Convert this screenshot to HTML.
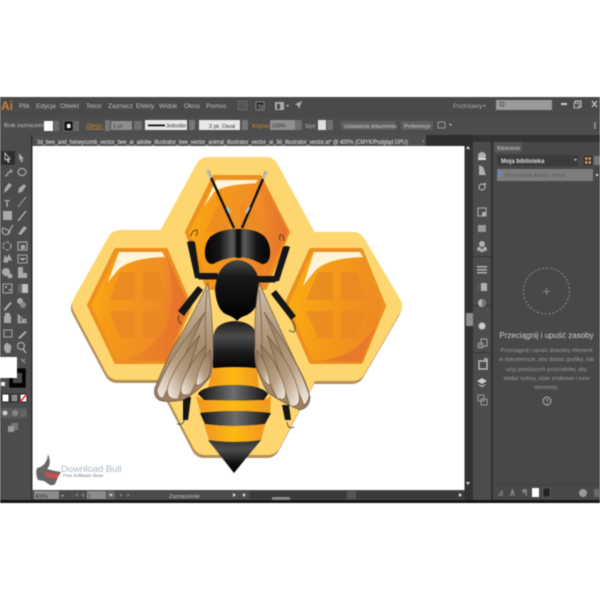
<!DOCTYPE html>
<html><head><meta charset="utf-8"><style>
html,body{margin:0;padding:0;background:#fff;width:600px;height:600px;overflow:hidden}
svg{display:block;filter:blur(.65px)}
text{font-family:"Liberation Sans",sans-serif}
</style></head><body>
<svg width="600" height="600" viewBox="0 0 600 600" xmlns="http://www.w3.org/2000/svg">
<defs>
<linearGradient id="hon" x1="0" y1="0" x2="1" y2=".2"><stop offset="0" stop-color="#fcb010"/><stop offset=".3" stop-color="#f69a18"/><stop offset=".75" stop-color="#f08c26"/><stop offset="1" stop-color="#e8742a"/></linearGradient>
<linearGradient id="honr" x1="0" y1="0" x2="1" y2=".2"><stop offset="0" stop-color="#fcb010"/><stop offset=".5" stop-color="#f59a18"/><stop offset="1" stop-color="#ee8a22"/></linearGradient>
<linearGradient id="red" x1="0" y1="0" x2="1" y2="0"><stop offset="0" stop-color="#ee8c28"/><stop offset="1" stop-color="#e6702c"/></linearGradient>
<linearGradient id="blk" x1="0" y1="0" x2="0" y2="1"><stop offset="0" stop-color="#1c1c1c"/><stop offset=".32" stop-color="#4c4c4c"/><stop offset=".65" stop-color="#1c1c1c"/><stop offset="1" stop-color="#030303"/></linearGradient>
<linearGradient id="th" x1="0" y1="0" x2="0" y2="1"><stop offset="0" stop-color="#4a4a4a"/><stop offset=".28" stop-color="#181818"/><stop offset="1" stop-color="#000"/></linearGradient>
<linearGradient id="band" x1="0" y1="0" x2="1" y2="0"><stop offset="0" stop-color="#111"/><stop offset=".5" stop-color="#6e6e6e"/><stop offset="1" stop-color="#111"/></linearGradient>
<linearGradient id="tip" x1="0" y1="0" x2="0" y2="1"><stop offset="0" stop-color="#333"/><stop offset=".3" stop-color="#4c4c4c"/><stop offset=".7" stop-color="#111"/><stop offset="1" stop-color="#000"/></linearGradient>
<linearGradient id="yel" x1="0" y1="0" x2="1" y2="0"><stop offset="0" stop-color="#f1961e"/><stop offset=".5" stop-color="#fdb913"/><stop offset="1" stop-color="#f1961e"/></linearGradient>
<linearGradient id="eye" x1="0" y1="0" x2="1" y2="0"><stop offset="0" stop-color="#050505"/><stop offset=".45" stop-color="#151515"/><stop offset=".85" stop-color="#5c5c5c"/><stop offset="1" stop-color="#2c2c2c"/></linearGradient>
<linearGradient id="eye2" x1="1" y1="0" x2="0" y2="0"><stop offset="0" stop-color="#050505"/><stop offset=".45" stop-color="#151515"/><stop offset=".85" stop-color="#5c5c5c"/><stop offset="1" stop-color="#2c2c2c"/></linearGradient>
<linearGradient id="wing" x1="0" y1="0" x2="0" y2="1"><stop offset="0" stop-color="#cdbda7"/><stop offset=".5" stop-color="#ab9072"/><stop offset="1" stop-color="#9a7f60"/></linearGradient>
<linearGradient id="fL" x1="1" y1="0" x2="0" y2="1"><stop offset="0" stop-color="#8f7355"/><stop offset=".6" stop-color="#b89e82"/><stop offset="1" stop-color="#f4efe8"/></linearGradient>
<linearGradient id="fR" x1="0" y1="0" x2="1" y2="1"><stop offset="0" stop-color="#8f7355"/><stop offset=".6" stop-color="#b89e82"/><stop offset="1" stop-color="#f4efe8"/></linearGradient>
</defs>

<!-- chrome -->
<rect x="0" y="97" width="600" height="403" fill="#4a4a4a"/>
<rect x="0" y="117" width="600" height="18" fill="#4d4d4d"/>
<rect x="0" y="135" width="32" height="365" fill="#4c4c4c"/>
<rect x="32" y="135" width="432" height="11" fill="#363636"/>
<rect x="32" y="135" width="394" height="11" fill="#4f4f4f"/>
<rect x="426" y="135" width="47" height="12" fill="#2e2e2e"/>
<rect x="464" y="146" width="9" height="354" fill="#323232"/>
<rect x="466" y="313" width="7" height="13" fill="#8e8e8e"/>
<rect x="473" y="135" width="19" height="365" fill="#4c4c4c"/>
<rect x="492" y="135" width="108" height="365" fill="#484848"/>
<rect x="473" y="135" width="127" height="7" fill="#333"/>
<rect x="491" y="135" width="2" height="365" fill="#303030"/>
<rect x="473" y="305" width="19" height="1" fill="#333"/>
<rect x="473" y="352" width="19" height="1" fill="#333"/>
<rect x="473" y="256" width="19" height="1" fill="#333"/>
<rect x="493" y="484" width="107" height="1" fill="#404040"/>
<rect x="0" y="500" width="600" height="3" fill="#151515"/>
<rect x="31" y="135" width="1.5" height="365" fill="#2d2d2d"/>

<!-- menu -->
<text x="1" y="110" font-size="12" font-weight="700" fill="#c9823a">Ai</text>
<g font-size="6.6" fill="#bdbdbd">
<text x="19" y="108">Plik</text><text x="36" y="108">Edycja</text><text x="60" y="108">Obiekt</text><text x="86" y="108">Tekst</text><text x="108" y="108">Zaznacz</text><text x="136" y="108">Efekty</text><text x="159" y="108">Widok</text><text x="184" y="108">Okno</text><text x="206" y="108">Pomoc</text>
</g>
<rect x="238" y="101" width="9" height="9" fill="#555" stroke="#666"/>
<rect x="256" y="102" width="8" height="8" fill="#222" stroke="#888"/><text x="257.5" y="109" font-size="6" fill="#ccc">St</text>
<rect x="275" y="102" width="9" height="8" fill="#aaa"/><rect x="277" y="104" width="3" height="5" fill="#444"/><path d="M286 105h3l-1.500 2z" fill="#bbb"/>
<path d="M295 104l7-3-3 8-1-3z" fill="#aaa"/>
<text x="453" y="108" font-size="6.800" fill="#a5a5a5">Podstawy</text><path d="M483 105h3l-1.500 2z" fill="#aaa"/>
<rect x="496" y="100" width="56" height="10" fill="#9a9a9a"/>
<circle cx="502" cy="104" r="2" fill="none" stroke="#555"/>
<rect x="561" y="103" width="6" height="2" fill="#ccc"/>
<rect x="575" y="101" width="6" height="6" fill="none" stroke="#ccc"/><rect x="574" y="103" width="5" height="5" fill="#555" stroke="#ccc" stroke-width=".8"/>
<path d="M592 101l5 6m0-6l-5 6" stroke="#ccc" stroke-width="1.200"/>

<!-- control bar -->
<text x="4" y="127" font-size="5.600" fill="#c4c4c4">Brak zaznaczenia</text>
<rect x="44" y="121" width="9" height="10" fill="#fff"/>
<rect x="54" y="121" width="5" height="10" fill="#6a6a6a"/>
<rect x="64" y="121" width="9" height="10" fill="#111" stroke="#999" stroke-width=".5"/><rect x="67" y="124" width="3.500" height="4" fill="#fff"/>
<rect x="74" y="121" width="5" height="10" fill="#6a6a6a"/>
<text x="86" y="128" font-size="6" fill="#d08a2a" text-decoration="underline">Obrys:</text>
<rect x="105" y="120" width="5" height="11" fill="#777"/>
<rect x="111" y="121" width="21" height="9" fill="#8d8d8d"/><text x="113" y="128" font-size="5.600" fill="#444">1 pt</text>
<rect x="134" y="121" width="8" height="9" fill="#6f6f6f"/>
<rect x="145" y="120" width="42" height="10" fill="#e8e8e8"/><rect x="148" y="124.500" width="17" height="1.800" fill="#111"/><text x="166" y="127.500" font-size="5" fill="#333">Jednolite</text>
<rect x="189" y="120" width="6" height="10" fill="#777"/>
<rect x="199" y="120" width="41" height="10" fill="#e8e8e8"/><text x="209" y="128" font-size="5.800" fill="#333">2 pt. Owal</text>
<rect x="242" y="120" width="6" height="10" fill="#777"/>
<text x="252" y="128" font-size="6" fill="#d08a2a">Krycie:</text>
<rect x="270" y="120" width="25" height="10" fill="#8f8f8f"/><text x="272" y="127.500" font-size="5.400" fill="#333">100%</text>
<rect x="295" y="120" width="7" height="10" fill="#6f6f6f"/>
<text x="305" y="128" font-size="5.800" fill="#bbb">Styl:</text>
<rect x="318" y="120" width="8" height="10" fill="#e0e0e0"/><rect x="327" y="120" width="6" height="10" fill="#6f6f6f"/>
<rect x="341" y="121" width="55" height="9" fill="#5f5f5f"/><text x="344" y="128" font-size="5.200" fill="#cfcfcf">Ustawienia dokumentu</text>
<rect x="401" y="121" width="32" height="9" fill="#5f5f5f"/><text x="404" y="128" font-size="5.200" fill="#cfcfcf">Preferencje</text>
<rect x="438" y="122" width="7" height="6" fill="none" stroke="#aaa" stroke-width=".8"/><path d="M449 124h3l-1.500 2z" fill="#ccc"/>
<rect x="594" y="122" width="2" height="7" fill="#888"/>

<!-- tab -->
<text x="37" y="144" font-size="6" fill="#ececec" textLength="371" lengthAdjust="spacingAndGlyphs">3d_bee_and_honeycomb_vector_bee_ai_adobe_illustrator_bee_vector_animal_illustrator_vector_ai_3d_illustrator_vector.ai* @ 400% (CMYK/Podgląd GPU)</text>
<text x="422" y="143" font-size="5" fill="#aaa">×</text>

<!-- canvas -->
<rect x="32.500" y="146" width="432" height="344" fill="#fff"/>

<!-- honeycomb -->
<g stroke-linejoin="round">
<path d="M208 170H266L340 306L268 442H205L134 306Z M120 243H160L196 305L160 367H118L85 305Z M313 245H353L389 306L353 368H313L276 306Z" fill="#b3905c" stroke="#b3905c" stroke-width="26" transform="translate(-1 3)"/>
<path d="M208 170H266L340 306L268 442H205L134 306Z" fill="#fdd66f" stroke="#fdd66f" stroke-width="26"/>
<path d="M120 243H160L196 305L160 367H118L85 305Z" fill="#fdd66f" stroke="#fdd66f" stroke-width="26"/>
<path d="M313 245H353L389 306L353 368H313L276 306Z" fill="#fdd66f" stroke="#fdd66f" stroke-width="26"/>
<!-- center cell -->
<path d="M214 177H260L288 232L265 288H208L187 232Z" fill="url(#hon)" stroke="#ec9020" stroke-width="4"/>
<path d="M204 207L216 180H258L262 183Q225 184 214 192Z" fill="#fff3d8"/>
<path d="M218 205L229 205V232H206ZM240 205H253L266 232H240Z" fill="#ea8a22" opacity=".7"/>
<path d="M256 182Q272 215 264 250L262 288L288 232L262 178Z" fill="url(#red)"/>
<!-- left cell -->
<path d="M116 250H166L190 306L166 362H116L89 305Z" fill="url(#hon)" stroke="#ec9020" stroke-width="4"/>
<path d="M108 282L119 252H162L165 257Q130 258 118 270Z" fill="#fff3d8"/>
<path d="M120 272H135V300H110Z M143 272H158L169 300H143Z M110 311H135V338H120Z M143 311H169L158 338H143Z" fill="#e98822" opacity=".85"/>
<path d="M166 254Q178 300 165 330Q150 352 122 361H166L189 306Z" fill="url(#red)"/>
<!-- right cell -->
<path d="M311 250H361L384 306L361 362H311L286 305Z" fill="url(#honr)" stroke="#ec9020" stroke-width="4"/>
<path d="M303 286L314 252H360L363 257Q326 258 314 272Z" fill="#fff3d8"/>
<path d="M318 272H333V300H306Z M341 272H356L367 300H341Z M306 311H333V338H318Z M341 311H367L356 338H341Z" fill="#e98822" opacity=".8"/>
<path d="M320 361Q365 356 382 312L361 362Z" fill="#e8782c"/>
</g>

<!-- antennae -->
<path d="M208 171L234 228M266 172L242 228" stroke="#111" stroke-width="2.400" fill="none"/>
<path d="M207 170L211 178M267 171L263 179M227 207L230 213M249 207L246 213" stroke="#bbb" stroke-width="2.600"/>

<!-- legs -->
<g fill="#161616">
<path d="M187 242Q192 240 195 242L200 276Q198 279 195 278Z"/>
<path d="M290 247Q286 245 283 247L273 279Q276 282 279 281Z"/>
<rect x="198" y="273" width="20" height="6.500" rx="1.500"/>
<rect x="255" y="276" width="21" height="6.500" rx="1.500"/>
<path d="M198 286L203 290L184 316L178 311Z"/>
<path d="M276 290L271 294L291 320L296 316Z"/>
<path d="M183 397H191L188 420H183Z"/>
<path d="M282 405H289L291 420H285Z"/>
</g>
<g fill="none" stroke="#333" stroke-width=".8">
<path d="M191 236Q192 230 197 230Q198 233 196 236"/><path d="M284 241Q284 234 280 235Q279 238 280 240"/>
<path d="M179 315Q177 322 182 324"/><path d="M292 320Q297 328 294 332Q291 332 289 330"/>
<path d="M184 420Q184 425 177 424"/><path d="M287 422Q288 430 294 427"/>
</g>

<!-- head -->
<path d="M237 229Q220 229 210 237Q204 245 205 255Q206 264 213 264Q224 258 237 257Z" fill="url(#eye)"/>
<path d="M240 229Q257 229 265 237Q271 245 270 255Q269 264 262 264Q251 258 240 257Z" fill="url(#eye2)"/>
<path d="M236 229H241V258H236Z" fill="#111"/>

<!-- abdomen -->
<path d="M213 340Q213 322 235 321Q257 322 257 340V369Q235 366 213 369Z" fill="url(#blk)"/>
<path d="M213 368Q235 366 257 368L259 388Q235 384 208 388Z" fill="url(#yel)"/>
<path d="M198 394Q202 385 235 385Q262 385 268 394L264 400Q235 401 204 400Z" fill="url(#band)"/>
<path d="M196 396L204 400Q235 401 264 400L271 396L270 414Q235 417 201 414Z" fill="url(#yel)"/>
<path d="M200 413Q235 409 271 413L265 424Q235 428 205 424Z" fill="url(#band)"/>
<path d="M204 424Q235 428 265 424L261 441Q235 445 209 440Z" fill="url(#yel)"/>
<path d="M208 440Q235 444 261 440L234 473Z" fill="url(#tip)"/>

<!-- thorax -->
<path d="M238 260Q217 262 215 290Q217 312 228 315Q235 318 237 321Q240 317 247 315Q260 308 260 288Q258 262 238 260Z" fill="url(#th)"/>

<!-- wings -->
<path d="M208 283Q212 310 213 340Q214 365 210 377Q198 392 183 400Q165 403 159 400Q153 396 155 388Q160 375 173 347Q190 322 208 283Z" fill="url(#wing)" stroke="#6f553d" stroke-width=".7"/>
<path d="M259 283Q254 310 255 345Q254 365 258 372Q263 385 268 393Q285 404 300 410Q309 408 310 398Q308 385 297 365Q285 340 259 283Z" fill="url(#wing)" stroke="#6f553d" stroke-width=".7"/>
<g stroke="#6f553d" stroke-width=".6">
<path d="M205 312Q193 340 163 398Q158 398 157 390Q168 360 205 312Z" fill="url(#fL)"/>
<path d="M200 335Q190 365 178 399Q165 400 168 386Q175 365 200 335Z" fill="url(#fL)"/>
<path d="M206 345Q205 370 190 394Q178 398 182 384Q190 362 206 345Z" fill="url(#fL)"/>
<path d="M210 350Q213 365 208 378Q198 388 196 384Q198 365 210 350Z" fill="url(#fL)"/>
<path d="M264 312Q276 340 304 405Q309 402 309 394Q298 360 264 312Z" fill="url(#fR)"/>
<path d="M267 335Q277 365 290 406Q303 408 298 390Q292 365 267 335Z" fill="url(#fR)"/>
<path d="M261 345Q262 370 277 398Q288 403 285 388Q277 362 261 345Z" fill="url(#fR)"/>
<path d="M257 350Q255 362 259 372Q268 388 270 384Q268 365 257 350Z" fill="url(#fR)"/>
</g>
<path d="M207 290Q204 320 206 345M259 290Q262 320 262 345" fill="none" stroke="#6f553d" stroke-width=".7"/>

<!-- watermark -->
<path d="M37 468Q47 466 48 454Q52 464 47 469Q54 471 61 472L58 477L56 482Q55 486 50 485L44 481L38 480Q35 474 37 468Z" fill="#666"/>
<path d="M44 472L60 474L56 479L47 477Z" fill="#c9504f"/>
<text x="61" y="472" font-size="9.500" fill="#a8b8c8">Download Bull</text>
<text x="63" y="477" font-size="4.500" fill="#777">Free Software Store</text>

<!-- status bar -->
<rect x="32" y="490" width="433" height="10" fill="#4b4b4b"/>
<rect x="34" y="491" width="25" height="8" fill="#8c8c8c"/><text x="35" y="498" font-size="5" fill="#333">400%</text>
<path d="M61 495h3l-1.500 2z" fill="#bbb"/>
<path d="M72 493v4M75 495l3-2v4zM81 495l3-2v4z" fill="#777" stroke="#777" stroke-width=".4"/>
<rect x="87" y="491" width="19" height="8" fill="#8c8c8c"/><text x="88" y="498" font-size="5" fill="#333">1</text>
<rect x="107" y="491" width="8" height="8" fill="#666"/><path d="M109 494h4l-2 2.500z" fill="#ddd"/>
<path d="M120 493l3 2-3 2zM127 493l3 2-3 2z" fill="#777"/>
<text x="169" y="498" font-size="5.400" fill="#c9c9c9">Zaznaczenie</text>
<path d="M233 493l3 2-3 2z" fill="#ddd"/><path d="M245 493l-3 2 3 2z" fill="#ddd"/>
<rect x="250" y="491" width="215" height="8" fill="#3a3a3a"/>
<rect x="272" y="497" width="18" height="3" fill="#888"/>
<rect x="347" y="491" width="9" height="8" fill="#555"/>
<path d="M466 149l2-3 2 3zM466 482h4l-2 3z" fill="#ddd"/>
<path d="M459 493l3 2-3 2z" fill="#eee"/>

<!-- tools -->
<g fill="#a9a9a9">
<rect x="1" y="151" width="14" height="14" fill="#2f2f2f"/>
<path d="M5 153l5 6-2 0 1 3-1 0-1-3-2 1z" fill="none" stroke="#ddd" stroke-width=".8"/>
<path d="M19 153l5 6-2 0 1 3-2 0-1-3-1 1z"/>
<path d="M5 176l4-5 1 1-4 5zM10 168l1 2 2 0-1 1 1 2-2-1-1 1z"/>
<ellipse cx="22" cy="172" rx="4" ry="3.500" fill="none" stroke="#a9a9a9" stroke-width="1.200"/>
<path d="M4 193l1-5 4-5 3 2-4 5z"/><path d="M18 193l1-5 5-4 2 2-4 6z"/>
<text x="4" y="207" font-size="10" font-weight="700">T</text><path d="M18 207L26 197" stroke="#a9a9a9" stroke-width="1"/>
<rect x="3" y="211" width="9" height="9"/><path d="M18 221l8-10" stroke="#a9a9a9" stroke-width="1.500"/>
<path d="M3 228a4 4 0 1 0 7 3zM8 233l5-8" stroke="#a9a9a9" fill="none" stroke-width="1.200"/><path d="M18 234l6-8 3 2-6 7z"/>
<circle cx="7" cy="246" r="4" fill="none" stroke="#a9a9a9" stroke-width="1.200" stroke-dasharray="3 1.500"/><rect x="18" y="242" width="9" height="8" fill="none" stroke="#a9a9a9" stroke-width="1.200"/><rect x="21" y="245" width="4" height="4"/>
<path d="M3 262l2-7 2 3 2-4 2 4 1 3-3-1-2 3z"/><rect x="18" y="255" width="9" height="8" fill="none" stroke="#a9a9a9"/><path d="M19 258l4 3 3-3z"/>
<circle cx="6" cy="272" r="4"/><circle cx="10" cy="276" r="2.500"/><path d="M18 267v11h9v-5h-4v-6z"/>
<rect x="3" y="284" width="9" height="9" fill="none" stroke="#a9a9a9"/><path d="M5 286h2v2h-2zM9 289h2v2h-2z"/><rect x="18" y="284" width="10" height="9" fill="#c0c0c0"/><rect x="18" y="284" width="4" height="9" fill="#666"/>
<path d="M4 309l6-7 2 1-6 7-2 1z"/><circle cx="20" cy="301" r="3"/><circle cx="23" cy="305" r="3" fill="#888"/>
<path d="M5 313h5v3h1v7H4v-7h1z"/><path d="M18 314v9h9M20 322v-5h2v5zM24 322v-3h2v3z" fill="#a9a9a9" stroke="#a9a9a9" stroke-width=".6"/>
<rect x="4" y="330" width="8" height="7" fill="none" stroke="#a9a9a9"/><path d="M18 338l7-7 2 1-7 7z"/>
<path d="M4 349q0-6 2-5v-1q2-1 2 1 2-1 2 1 2 0 1 4l-1 4H6z"/><circle cx="21" cy="346" r="3.500" fill="none" stroke="#a9a9a9" stroke-width="1.200"/><path d="M23 349l3 4" stroke="#a9a9a9" stroke-width="1.500"/>
</g>
<rect x="9" y="368" width="17" height="20" fill="#050505" stroke="#555" stroke-width=".5"/>
<rect x="13" y="373" width="9" height="10" fill="#4a4a4a"/>
<rect x="0" y="357" width="17" height="21" fill="#fff"/>
<path d="M21 359l4 4M24 359l1 1" stroke="#aaa" fill="none"/>
<rect x="1" y="382" width="4" height="4" fill="#eee"/>
<rect x="2" y="394" width="7" height="8" fill="#fff" stroke="#222"/>
<rect x="11" y="394" width="7" height="8" fill="#888" stroke="#222"/>
<path d="M20 394h7v8h-7z" fill="#fff" stroke="#222"/><path d="M20 402l7-8" stroke="#d22" stroke-width="1.500"/>
<rect x="1" y="408" width="26" height="10" fill="#5c5c5c"/>
<circle cx="5" cy="413" r="2.500" fill="#ccc"/><circle cx="15" cy="413" r="3" fill="#888"/><rect x="21" y="410" width="5" height="6" fill="#666"/>
<rect x="11" y="423" width="7" height="7" fill="#777"/><rect x="8" y="426" width="6" height="6" fill="#999"/>

<!-- dock icons -->
<g fill="#b0b0b0">
<circle cx="482" cy="156" r="4"/><rect x="478" y="158" width="8" height="2" fill="#ddd"/>
<path d="M479 175v-10l4 2 3 8z"/>
<circle cx="482" cy="187" r="3" fill="none" stroke="#b0b0b0" stroke-width="1.200"/><circle cx="485" cy="184" r="1.200"/>
<rect x="478" y="208" width="8" height="8" fill="none" stroke="#b0b0b0"/><rect x="482" y="212" width="4" height="4"/>
<rect x="478" y="225" width="8" height="7" fill="#999"/>
<circle cx="482" cy="244" r="3"/><circle cx="485" cy="249" r="2"/><circle cx="479" cy="249" r="2"/><path d="M481 249h2l1 3h-4z"/>
<rect x="477" y="266" width="10" height="1.500"/><rect x="477" y="269" width="10" height="1.500"/><rect x="477" y="272" width="10" height="1.500"/>
<rect x="477" y="283" width="10" height="8"/><rect x="477" y="283" width="4" height="8" fill="#555"/>
<circle cx="482" cy="303" r="4"/><path d="M482 299a4 4 0 0 1 0 8z" fill="#777"/>
<circle cx="482" cy="326" r="3.500" fill="#ccc" stroke="#888" stroke-dasharray="1 1"/>
<rect x="481" y="339" width="6" height="7" fill="none" stroke="#aaa"/><rect x="478" y="343" width="5" height="5" fill="#777" stroke="#aaa" stroke-width=".6"/>
<path d="M479 361h8v8h-8zM484 359h3v3" fill="none" stroke="#ccc" stroke-width="1.200"/>
<path d="M482 378l5 3-5 3-5-3z" fill="#ccc"/><path d="M477 384l5 3 5-3-5 1.500z" fill="#ccc"/>
<rect x="478" y="395" width="6" height="6" fill="none" stroke="#999"/><rect x="481" y="399" width="6" height="6" fill="none" stroke="#999"/>
</g>

<!-- panel -->
<rect x="494" y="142" width="28" height="11" fill="#555"/>
<text x="497" y="150" font-size="5.800" fill="#ccc">Biblioteki</text>
<rect x="494" y="153" width="106" height="331" fill="#484848"/>
<rect x="497" y="155" width="81" height="11" fill="#3c3c3c"/>
<text x="501" y="163" font-size="6" font-weight="700" fill="#ddd">Moja biblioteka</text>
<path d="M574 159h3l-1.500 2z" fill="#ccc"/>
<rect x="584" y="156" width="8" height="9" fill="#222"/><path d="M585 157h2.500v3H585zM588.500 157h2.500v3h-2.500zM585 161h2.500v3H585zM588.500 161h2.500v3h-2.500z" fill="#c96"/>
<rect x="594" y="156" width="6" height="9" fill="#777"/>
<rect x="497" y="169" width="96" height="12" fill="#7d7d7d"/>
<circle cx="500" cy="174" r="1.800" fill="none" stroke="#5c93d6" stroke-width="1.200"/>
<text x="505" y="177" font-size="5.600" fill="#5a5a5a">Przeszukaj Adobe Stock</text>
<path d="M596 174h2v2h-2z" fill="#ddd"/>

<circle cx="546.500" cy="291" r="23" fill="none" stroke="#8d8d8d" stroke-width="1" stroke-dasharray="2 2"/>
<path d="M543 291.500h7M546.500 288v7" stroke="#8d8d8d" stroke-width="1"/>
<text x="546.500" y="338" font-size="8" fill="#cfcfcf" text-anchor="middle">Przeciągnij i upuść zasoby</text>
<g font-size="5.700" fill="#9f9f9f" text-anchor="middle">
<text x="546.500" y="352">Przeciągnij i upuść dowolny element</text>
<text x="546.500" y="361">w dokumencie, aby dodać grafikę, lub</text>
<text x="546.500" y="371">użyj poniższych przycisków, aby</text>
<text x="546.500" y="380">dodać kolory, style znakowe i inne</text>
<text x="546.500" y="389">elementy.</text>
</g>
<circle cx="547" cy="401" r="4" fill="none" stroke="#bbb" stroke-width=".9"/>
<text x="547" y="403.500" font-size="6" fill="#bbb" text-anchor="middle">?</text>
<g fill="#6f6f6f">
<path d="M498 495l4-5 1 1v5h-5z"/>
<path d="M510 496l2-7h1l2 7h-1.500l-1-3-1 3z" fill="#858585"/>
<path d="M523 489h4v7h-1.500v-3a2 2 0 0 1-2.500-4z" fill="#808080"/>
</g>
<rect x="532" y="488" width="7" height="9" fill="#fff"/>
<rect x="543" y="488" width="7" height="9" fill="#222" stroke="#666" stroke-width=".6"/>
<circle cx="583" cy="493" r="4" fill="#999"/><rect x="594" y="489" width="5" height="8" fill="#6a6a6a"/>
</svg>
</body></html>
